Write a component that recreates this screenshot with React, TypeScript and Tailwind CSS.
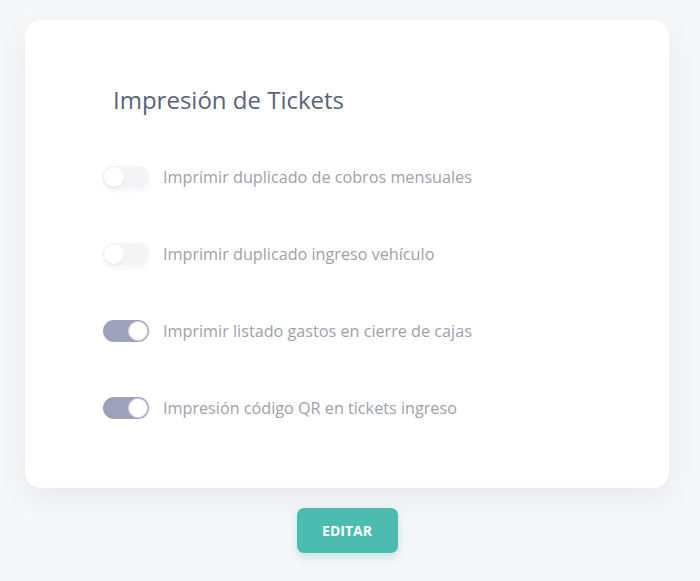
import React from "react";

function Toggle({ on }: { on: boolean }) {
  return (
    <div
      className={
        "relative h-[22px] w-[46px] shrink-0 rounded-full " +
        (on ? "bg-[#9fa0ba]" : "bg-[#f4f4f6] shadow-[0_3px_6px_rgba(0,0,0,0.04)]")
      }
    >
      <div
        className={
          "absolute top-[1px] h-[20px] w-[20px] rounded-full bg-white " +
          (on
            ? "right-[1px] border border-[#d4d5de]"
            : "left-[1px] shadow-[0_1px_3px_rgba(0,0,0,0.08)]")
        }
      />
    </div>
  );
}

const rows: { label: string; on: boolean }[] = [
  { label: "Imprimir duplicado de cobros mensuales", on: false },
  { label: "Imprimir duplicado ingreso vehículo", on: false },
  { label: "Imprimir listado gastos en cierre de cajas", on: true },
  { label: "Impresión código QR en tickets ingreso", on: true },
];

export default function App() {
  return (
    <div
      className="min-h-[581px] w-full bg-[#f6f7f9] pl-[25px] pt-[20px]"
      style={{ fontFamily: '"Open Sans", "Noto Sans", sans-serif' }}
    >
      <div className="flex w-[644px] flex-col items-center">
        <div className="w-[644px] rounded-[16px] bg-white pb-[69px] pl-[78px] pt-[64px] shadow-[0_10px_30px_rgba(40,50,70,0.07)]">
          <h2 className="pl-[10px] text-[24px] leading-[32px] text-[#5a637a]">
            Impresión de Tickets
          </h2>
          <div className="mt-[50px] flex flex-col gap-[55px]">
            {rows.map((r) => (
              <div key={r.label} className="flex h-[22px] items-center gap-[14px]">
                <Toggle on={r.on} />
                <span className="text-[16.2px] leading-[22px] text-[#a0a0ab]">{r.label}</span>
              </div>
            ))}
          </div>
        </div>
        <button className="mt-[20px] h-[45px] w-[101px] rounded-[7px] bg-[#4cbcb0] text-[14px] font-bold text-white shadow-[0_4px_10px_rgba(76,188,176,0.3)]">
          EDITAR
        </button>
      </div>
    </div>
  );
}
